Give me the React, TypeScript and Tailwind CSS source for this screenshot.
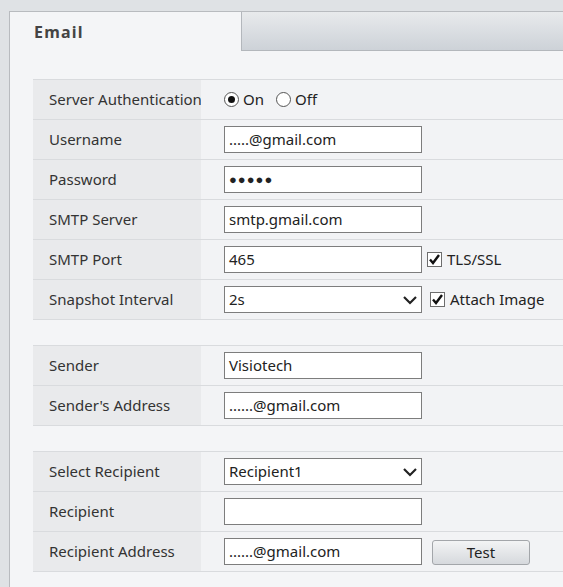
import React from 'react';

const font = { fontFamily: '"Noto Sans", "Open Sans", Arial, sans-serif' };

type Row = { label: string; field: React.ReactNode };

const TextBox = ({ value, password }: { value: string; password?: boolean }) => (
    <div className="w-[198px] h-[27px] border border-[#7d7d7d] bg-white flex items-center pl-[4px] text-[15px] text-[#222] whitespace-nowrap">
        {password ? <span className="tracking-[1px] text-[13px]">●●●●●</span> : value}
    </div>
);

const Dropdown = ({ value }: { value: string }) => (
    <div className="w-[198px] h-[27px] border border-[#7d7d7d] bg-white flex items-center justify-between pl-[4px] pr-[3px] text-[15px] text-[#222]">
        <span>{value}</span>
        <svg width="16" height="10" viewBox="0 0 16 10">
            <path d="M2 2 L8 8 L14 2" fill="none" stroke="#222" strokeWidth="2.2" />
        </svg>
    </div>
);

const Check = ({ label }: { label: string }) => (
    <div className="flex items-center gap-[5px] text-[15px] text-[#222] whitespace-nowrap">
        <span className="w-[15px] h-[15px] border border-[#6d6d6d] bg-white flex items-center justify-center">
            <svg width="13" height="13" viewBox="0 0 13 13">
                <path d="M2 6.5 L5 10 L11 2" fill="none" stroke="#111" strokeWidth="2.4" />
            </svg>
        </span>
        {label}
    </div>
);

const Radio = ({ label, checked }: { label: string; checked?: boolean }) => (
    <div className="flex items-center gap-[4px] text-[15px] text-[#222]">
        <span className="w-[15px] h-[15px] rounded-full border border-[#555] bg-white flex items-center justify-center">
            {checked && <span className="w-[7px] h-[7px] rounded-full bg-[#111]" />}
        </span>
        {label}
    </div>
);

const Table = ({ rows }: { rows: Row[] }) => (
    <div className="w-[560px] border-b border-[#d9dbde]">
        {rows.map((r) => (
            <div key={r.label} className="flex h-[40px] border-t border-[#d9dbde]">
                <div className="w-[168px] shrink-0 bg-[#e9eaec] flex items-center pl-[16px] text-[15px] text-[#333] whitespace-nowrap">
                    {r.label}
                </div>
                <div className="flex-1 bg-[#f2f3f5] flex items-center pl-[23px]">{r.field}</div>
            </div>
        ))}
    </div>
);

export default function App() {
    const server: Row[] = [
        {
            label: 'Server Authentication',
            field: (
                <div className="flex items-center gap-[12px]">
                    <Radio label="On" checked />
                    <Radio label="Off" />
                </div>
            ),
        },
        { label: 'Username', field: <TextBox value=".....@gmail.com" /> },
        { label: 'Password', field: <TextBox value="" password /> },
        { label: 'SMTP Server', field: <TextBox value="smtp.gmail.com" /> },
        {
            label: 'SMTP Port',
            field: (
                <div className="flex items-center gap-[5px]">
                    <TextBox value="465" />
                    <Check label="TLS/SSL" />
                </div>
            ),
        },
        {
            label: 'Snapshot Interval',
            field: (
                <div className="flex items-center gap-[8px]">
                    <Dropdown value="2s" />
                    <Check label="Attach Image" />
                </div>
            ),
        },
    ];

    const sender: Row[] = [
        { label: 'Sender', field: <TextBox value="Visiotech" /> },
        { label: "Sender's Address", field: <TextBox value="......@gmail.com" /> },
    ];

    const recipient: Row[] = [
        { label: 'Select Recipient', field: <Dropdown value="Recipient1" /> },
        { label: 'Recipient', field: <TextBox value="" /> },
        {
            label: 'Recipient Address',
            field: (
                <div className="flex items-center gap-[10px]">
                    <TextBox value="......@gmail.com" />
                    <button className="w-[98px] h-[25px] mt-[1px] rounded-[3px] border border-[#a3a6aa] bg-gradient-to-b from-[#f3f4f5] to-[#d6d9dd] text-[15px] text-[#222]">
                        Test
                    </button>
                </div>
            ),
        },
    ];

    return (
        <div className="h-[587px] bg-[#dfe2e5] pt-[11px] pl-[9px] overflow-hidden" style={font}>
            <div className="h-[576px] border-l border-t border-[#b8bbbf] bg-[#f4f5f7]">
                <div className="flex h-[39px]">
                    <div className="w-[231px] flex items-center pl-[24px] text-[16px] font-bold tracking-[1.2px] text-[#444]">
                        Email
                    </div>
                    <div className="flex-1 border-l border-b border-[#b3b7bc] bg-gradient-to-b from-[#e8eaec] to-[#cdd2d8]" />
                </div>
                <div className="pl-[23px] pt-[28px] flex flex-col gap-[25px]">
                    <Table rows={server} />
                    <Table rows={sender} />
                    <Table rows={recipient} />
                </div>
            </div>
        </div>
    );
}
